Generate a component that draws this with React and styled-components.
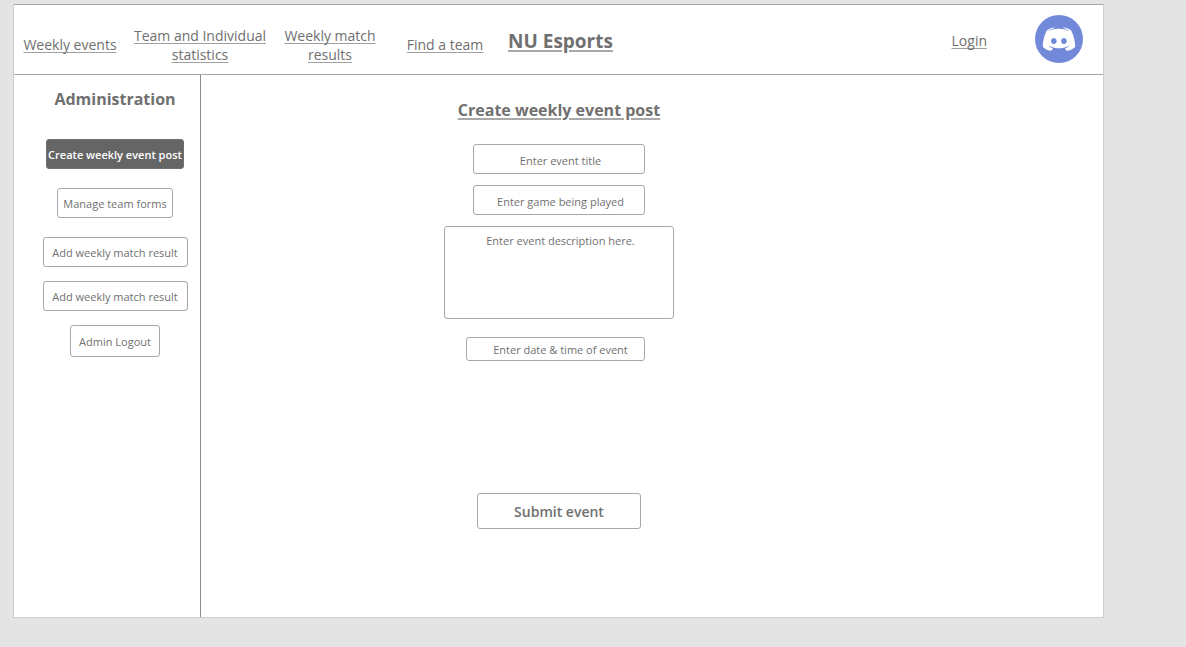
import React from "react";
import styled, { createGlobalStyle } from "styled-components";

const GlobalStyle = createGlobalStyle`
  * {
    box-sizing: border-box;
  }
  body {
    margin: 0;
    background: #e4e4e4;
    color: #707070;
    font-family: "Open Sans", "Noto Sans", sans-serif;
  }
  h1, h2, p {
    margin: 0;
  }
`;

const Canvas = styled.div`
  min-height: 100vh;
  display: flex;
  padding: 4px 82px 29px 13px;
`;

const Page = styled.div`
  flex: 1;
  display: flex;
  flex-direction: column;
  background: #fff;
  border: 1px solid #cfcfcf;
  border-top-color: #a6a6a6;
`;

const Header = styled.header`
  display: flex;
  align-items: center;
  min-height: 70px;
  padding: 0 20px 2px 8px;
  border-bottom: 1px solid #a6a6a6;
`;

const Nav = styled.nav`
  display: flex;
  align-items: center;
  gap: 14px;
  padding-top: 12px;
`;

const NavLink = styled.a`
  width: ${({ $width }) => $width};
  color: #707070;
  font-size: 14px;
  line-height: 19px;
  text-align: center;
  white-space: ${({ $wrap }) => ($wrap ? "normal" : "nowrap")};
  text-decoration-color: #a0a0a0;
  text-decoration-thickness: 1px;
  text-decoration-skip-ink: none;
  text-underline-offset: 2px;
`;

const LoginLink = styled(NavLink)`
  padding-top: 4px;
`;

const Brand = styled.a`
  margin-left: 10px;
  padding-top: 4px;
  color: #707070;
  font-size: 19px;
  font-weight: 700;
  line-height: 26px;
  white-space: nowrap;
  text-decoration-color: #a8a8a8;
  text-decoration-thickness: 2px;
  text-underline-offset: 2px;
`;

const Account = styled.div`
  display: flex;
  align-items: center;
  gap: 48px;
  margin-left: auto;
`;

const DiscordLink = styled.a`
  display: block;
  width: 48px;
  height: 48px;
`;

const Body = styled.div`
  flex: 1;
  display: flex;
`;

const Sidebar = styled.aside`
  flex: none;
  display: flex;
  flex-direction: column;
  align-items: center;
  width: 187px;
  padding: 12px 0 20px 16px;
  border-right: 1px solid #8a8a8a;
`;

const SidebarTitle = styled.h2`
  font-size: 16px;
  font-weight: 700;
  line-height: 24px;
`;

const Menu = styled.div`
  display: flex;
  flex-direction: column;
  align-items: center;
  gap: ${({ $gap }) => $gap};
  margin-top: ${({ $top }) => $top};
`;

const MenuButton = styled.button`
  width: ${({ $width }) => $width};
  height: ${({ $tall }) => ($tall ? "32px" : "30px")};
  padding: 0;
  border: 1px solid ${({ $active }) => ($active ? "#707070" : "#a8a8a8")};
  border-radius: 3px;
  background: ${({ $active }) => ($active ? "#656565" : "#fff")};
  color: ${({ $active }) => ($active ? "#fff" : "#707070")};
  font-family: inherit;
  font-size: 11px;
  font-weight: ${({ $active }) => ($active ? 600 : 500)};
  white-space: nowrap;
`;

const Main = styled.main`
  flex: 1;
  padding: 23px 20px 20px 243px;
`;

const Form = styled.form`
  display: flex;
  flex-direction: column;
  align-items: center;
  width: 230px;
`;

const FormTitle = styled.h1`
  margin-bottom: 22px;
  font-size: 16px;
  font-weight: 700;
  line-height: 24px;
  white-space: nowrap;
  text-decoration: underline;
  text-decoration-color: #a8a8a8;
  text-decoration-thickness: 2px;
  text-underline-offset: 2px;
`;

const Field = styled.input`
  width: ${({ $width }) => $width};
  height: ${({ $height }) => $height};
  margin-bottom: 11px;
  padding: 2px 0 0 ${({ $indent }) => $indent};
  border: 1px solid #a8a8a8;
  border-radius: 3px;
  background: #fff;
  color: #707070;
  font-family: inherit;
  font-size: 11px;
  font-weight: 500;
  line-height: 16px;
  text-align: center;
  &::placeholder {
    color: #707070;
    opacity: 1;
  }
`;

const TextArea = styled(Field).attrs({ as: "textarea" })`
  display: block;
  margin-bottom: 18px;
  padding-top: 6px;
  resize: none;
`;

const DateField = styled(Field)`
  margin-right: 7px;
  padding-top: 0;
`;

const SubmitButton = styled.button`
  width: 164px;
  height: 36px;
  margin-top: 121px;
  padding: 0;
  border: 1px solid #a8a8a8;
  border-radius: 3px;
  background: #fff;
  color: #707070;
  font-family: inherit;
  font-size: 14px;
  font-weight: 600;
`;

function DiscordLogo() {
  return (
    <svg width="48" height="48" viewBox="0 0 48 48" aria-hidden="true">
      <circle cx="24" cy="24" r="24" fill="#7289da" />
      <path
        transform="translate(7.8 12.6) scale(1.157)"
        fill="#fff"
        d="M20.6644 20C20.6644 20 19.8014 18.9762 19.0822 18.0714C22.2226 17.1905 23.4212 15.2381 23.4212 15.2381C22.4384 15.881 21.5034 16.3334 20.6644 16.6429C19.4658 17.1429 18.3151 17.4762 17.1884 17.6667C14.887 18.0953 12.7774 17.9762 10.9795 17.6429C9.613 17.381 8.4384 17 7.4555 16.6191C6.9041 16.4048 6.3048 16.1429 5.7055 15.8096C5.6336 15.7619 5.5616 15.7381 5.4897 15.6905C5.4418 15.6667 5.4178 15.6429 5.3938 15.6191C4.9623 15.381 4.7226 15.2143 4.7226 15.2143C4.7226 15.2143 5.8733 17.1191 8.9178 18.0238C8.1986 18.9286 7.3116 20 7.3116 20C2.0137 19.8333 0 16.381 0 16.381C0 8.7144 3.4521 2.5002 3.4521 2.5002C6.9041 -.0712 10.1884 0 10.1884 0L10.4281 .2859C6.113 1.5239 4.1233 3.4049 4.1233 3.4049C4.1233 3.4049 4.6507 3.1192 5.5377 2.7145C8.1027 1.5954 10.1404 1.2859 10.9795 1.2144C11.1233 1.1906 11.2432 1.1668 11.387 1.1668C12.8493 .9763 14.5034 .9287 16.2295 1.1192C18.5068 1.3811 20.952 2.0478 23.4452 3.4049C23.4452 3.4049 21.5514 1.6192 17.476 .3811L17.8116 0C17.8116 0 21.0959 -.0712 24.5479 2.5002C24.5479 2.5002 28 8.7144 28 16.381C28 16.381 25.9623 19.8333 20.6644 20ZM9.5171 8.881C8.1507 8.881 7.0719 10.0715 7.0719 11.5239C7.0719 12.9763 8.1747 14.1667 9.5171 14.1667C10.8836 14.1667 11.9623 12.9763 11.9623 11.5239C11.9863 10.0715 10.8836 8.881 9.5171 8.881ZM18.2671 8.881C16.9007 8.881 15.8219 10.0715 15.8219 11.5239C15.8219 12.9763 16.9247 14.1667 18.2671 14.1667C19.6336 14.1667 20.7123 12.9763 20.7123 11.5239C20.7123 10.0715 19.6336 8.881 18.2671 8.881Z"
      />
    </svg>
  );
}

export default function App() {
  return (
    <>
      <GlobalStyle />
      <Canvas>
        <Page>
          <Header>
            <Nav>
              <NavLink href="#events" $width="96px">Weekly events</NavLink>
              <NavLink href="#statistics" $width="136px" $wrap>
                Team and Individual statistics
              </NavLink>
              <NavLink href="#results" $width="96px" $wrap>
                Weekly match results
              </NavLink>
              <NavLink href="#teams" $width="106px">Find a team</NavLink>
            </Nav>
            <Brand href="#home">NU Esports</Brand>
            <Account>
              <LoginLink href="#login">Login</LoginLink>
              <DiscordLink href="#discord" aria-label="Discord">
                <DiscordLogo />
              </DiscordLink>
            </Account>
          </Header>
          <Body>
            <Sidebar>
              <SidebarTitle>Administration</SidebarTitle>
              <Menu $top="28px" $gap="19px">
                <MenuButton type="button" $width="138px" $active>
                  Create weekly event post
                </MenuButton>
                <MenuButton type="button" $width="116px">Manage team forms</MenuButton>
                <MenuButton type="button" $width="145px">Add weekly match result</MenuButton>
              </Menu>
              <Menu $top="14px" $gap="14px">
                <MenuButton type="button" $width="145px">Add weekly match result</MenuButton>
                <MenuButton type="button" $width="90px" $tall>Admin Logout</MenuButton>
              </Menu>
            </Sidebar>
            <Main>
              <Form onSubmit={(event) => event.preventDefault()}>
                <FormTitle>Create weekly event post</FormTitle>
                <Field aria-label="Event title" placeholder="Enter event title" $width="172px" $height="30px" $indent="3px" />
                <Field aria-label="Game being played" placeholder="Enter game being played" $width="172px" $height="30px" $indent="3px" />
                <TextArea aria-label="Event description" placeholder="Enter event description here." $width="230px" $height="93px" $indent="3px" />
                <DateField aria-label="Date and time of event" placeholder="Enter date &amp; time of event" $width="179px" $height="24px" $indent="10px" />
                <SubmitButton type="submit">Submit event</SubmitButton>
              </Form>
            </Main>
          </Body>
        </Page>
      </Canvas>
    </>
  );
}
